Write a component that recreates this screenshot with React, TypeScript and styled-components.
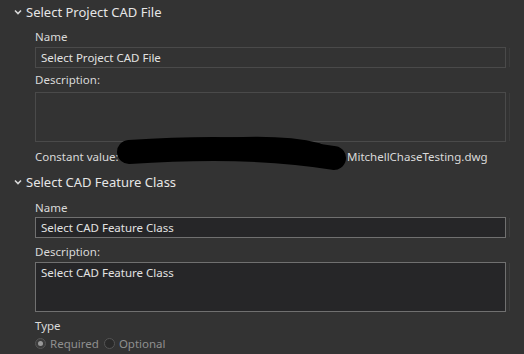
import React from "react";
import styled, { createGlobalStyle } from "styled-components";

const Global = createGlobalStyle`
  html, body { margin: 0; padding: 0; background: #333333; }
  body { font-family: "Noto Sans", "Open Sans", sans-serif; }
  #root { width: 524px; height: 354px; overflow: hidden; }
`;

const Page = styled.div`
  position: relative;
  width: 524px;
  height: 354px;
  background: #333333;
  color: #dedede;
  font-size: 11.5px;
  box-sizing: border-box;
  padding: 1px 18px 0 14px;
  display: flex;
  flex-direction: column;
`;

const Header = styled.div<{ $h: number }>`
  display: flex;
  align-items: center;
  gap: 4px;
  height: ${(p) => p.$h}px;
  font-size: 13px;
  color: #e6e6e6;
`;

const Body = styled.div`
  padding-left: 21px;
  display: flex;
  flex-direction: column;
`;

const Label = styled.div<{ $h: number; $pt: number }>`
  box-sizing: border-box;
  height: ${(p) => p.$h}px;
  padding-top: ${(p) => p.$pt}px;
  color: #dadada;
  line-height: 16px;
`;

const Field = styled.div<{ $enabled?: boolean; $h: number }>`
  position: relative;
  box-sizing: border-box;
  height: ${(p) => p.$h}px;
  border: 1px solid ${(p) => (p.$enabled ? "#707070" : "#4a4a4a")};
  background: ${(p) => (p.$enabled ? "#262628" : "#333333")};
  color: #e2e2e2;
  padding: 2px 5px;
  line-height: 15px;
  &::after {
    content: "";
    position: absolute;
    right: -5px;
    top: 0;
    bottom: 0;
    width: 1px;
    background: ${(p) => (p.$enabled ? "#3e3e3e" : "#3c3c3c")};
  }
`;

const ConstRow = styled.div`
  height: 28px;
  display: flex;
  align-items: center;
  color: #dadada;
  white-space: nowrap;
`;

const Lead = styled.span`
  width: 312px;
  flex: none;
`;

const RadioRow = styled.div`
  display: flex;
  align-items: center;
  gap: 5px;
  height: 18px;
`;

const RadioItem = styled.label`
  display: flex;
  align-items: center;
  gap: 4px;
  color: #8f8f8f;
`;

const Dot = styled.span<{ $checked?: boolean }>`
  width: 11px;
  height: 11px;
  border-radius: 50%;
  box-sizing: border-box;
  border: 1px solid #555;
  background: ${(p) => (p.$checked ? "#3c3c3c" : "#2a2a2a")};
  display: flex;
  align-items: center;
  justify-content: center;
  &::after {
    content: "";
    width: 5px;
    height: 5px;
    border-radius: 50%;
    background: ${(p) => (p.$checked ? "#9a9a9a" : "transparent")};
  }
`;

const Scribble = styled.svg`
  position: absolute;
  left: 0;
  top: 0;
  pointer-events: none;
`;

const Chevron = () => (
  <svg width="8" height="6" viewBox="0 0 8 6">
    <path d="M1 1.5 L4 4.5 L7 1.5" stroke="#d8d8d8" strokeWidth="1.6" fill="none" />
  </svg>
);

export default function App() {
  return (
    <Page>
      <Global />
      <Header $h={22}>
        <Chevron />
        <span>Select Project CAD File</span>
      </Header>
      <Body>
        <Label $h={24} $pt={6}>Name</Label>
        <Field $h={21}>Select Project CAD File</Field>
        <Label $h={24} $pt={4}>Description:</Label>
        <Field $h={50}></Field>
        <ConstRow>
          <Lead>Constant value:</Lead>MitchellChaseTesting.dwg
        </ConstRow>
      </Body>
      <Header $h={24}>
        <Chevron />
        <span>Select CAD Feature Class</span>
      </Header>
      <Body>
        <Label $h={23} $pt={6}>Name</Label>
        <Field $h={21} $enabled>Select CAD Feature Class</Field>
        <Label $h={24} $pt={6}>Description:</Label>
        <Field $h={50} $enabled>Select CAD Feature Class</Field>
        <Label $h={22} $pt={6}>Type</Label>
        <RadioRow>
          <RadioItem>
            <Dot $checked />
            Required
          </RadioItem>
          <RadioItem>
            <Dot />
            Optional
          </RadioItem>
        </RadioRow>
      </Body>
      <Scribble width="524" height="354">
        <path
          d="M129 152 C 190 148, 270 147, 334 158"
          stroke="#000"
          strokeWidth="24"
          strokeLinecap="round"
          fill="none"
        />
        <path
          d="M200 147 C 250 142, 290 143, 318 150"
          stroke="#000"
          strokeWidth="14"
          strokeLinecap="round"
          fill="none"
        />
      </Scribble>
    </Page>
  );
}
